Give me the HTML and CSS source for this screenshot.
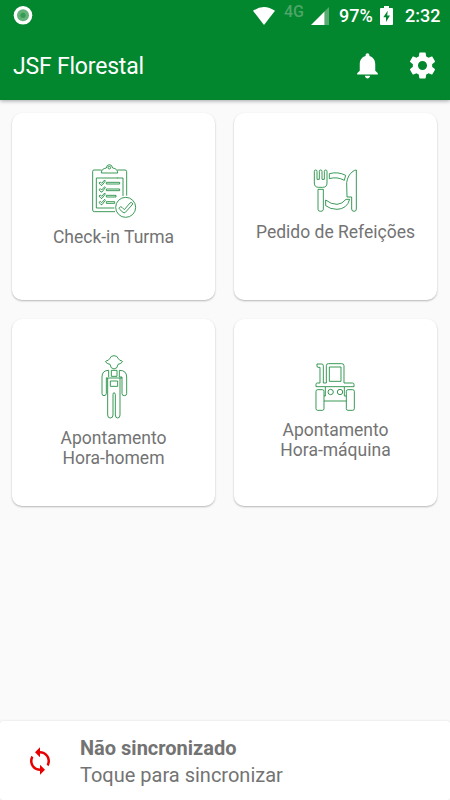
FILE: index.html
```html
<!DOCTYPE html>
<html lang="pt-BR">

<head>
    <meta charset="UTF-8">
    <meta name="viewport" content="width=device-width, initial-scale=1.0">
    <title>JSF Florestal</title>
    <link rel="stylesheet" href="styles.css">
</head>

<body>
    <header class="header">
        <div class="status-bar">
            <svg class="status-dot" viewBox="0 0 20 20">
                <circle cx="10" cy="9.3" r="9.3" fill="#ffffff"/>
                <circle cx="10" cy="9.3" r="6" fill="#65b27b"/>
                <circle cx="10" cy="9.3" r="2.6" fill="#359a52"/>
            </svg>
            <svg class="wifi" viewBox="0 0 22 18">
                <path d="M0 3.8Q11-3.8 22 3.8L11 18z" fill="#ffffff"/>
            </svg>
            <span class="network">4G</span>
            <svg class="signal" viewBox="0 0 18 18">
                <path d="M13.5 4.5L18 0v18h-4.5z" fill="#59aa70"/>
                <path d="M0 18L13.5 4.5V18z" fill="#ffffff"/>
            </svg>
            <span class="percent">97%</span>
            <svg class="battery" viewBox="0 0 13 19">
                <path d="M4 0h5v2h3q1 0 1 1v15q0 1-1 1H1q-1 0-1-1V3q0-1 1-1h3z" fill="#ffffff"/>
                <path d="M7.7 4.8L3.3 11.3H6V16l4-6.5H7.2z" fill="#02862e"/>
            </svg>
            <span class="clock">2:32</span>
        </div>
        <div class="toolbar">
            <h1 class="title">JSF Florestal</h1>
            <svg class="action" viewBox="0 0 24 24">
                <path d="M12 22c1.1 0 2-.9 2-2h-4c0 1.1.89 2 2 2zm6-6v-5c0-3.07-1.64-5.64-4.5-6.32V4c0-.83-.67-1.5-1.5-1.5s-1.5.67-1.5 1.5v.68C7.63 5.36 6 7.92 6 11v5l-2 2v1h16v-1l-2-2z"/>
            </svg>
            <svg class="action" viewBox="0 0 24 24">
                <path d="M19.43 12.98c.04-.32.07-.64.07-.98s-.03-.66-.07-.98l2.11-1.65c.19-.15.24-.42.12-.64l-2-3.46c-.12-.22-.39-.3-.61-.22l-2.49 1c-.52-.4-1.08-.73-1.69-.98l-.38-2.65C14.46 2.18 14.25 2 14 2h-4c-.25 0-.46.18-.49.42l-.38 2.65c-.61.25-1.17.59-1.69.98l-2.49-1c-.23-.09-.49 0-.61.22l-2 3.46c-.13.22-.07.49.12.64l2.11 1.65c-.04.32-.07.65-.07.98s.03.66.07.98l-2.11 1.65c-.19.15-.24.42-.12.64l2 3.46c.12.22.39.3.61.22l2.49-1c.52.4 1.08.73 1.69.98l.38 2.65c.03.24.24.42.49.42h4c.25 0 .46-.18.49-.42l.38-2.65c.61-.25 1.17-.59 1.69-.98l2.49 1c.23.09.49 0 .61-.22l2-3.46c.12-.22.07-.49-.12-.64l-2.11-1.65zM12 15.5c-1.93 0-3.5-1.57-3.5-3.5s1.57-3.5 3.5-3.5 3.5 1.57 3.5 3.5-1.57 3.5-3.5 3.5z"/>
            </svg>
        </div>
    </header>

    <main class="grid">
        <a class="card">
            <svg class="icon" width="70" height="60" viewBox="-3 36 210 180">
                <path d="M65 45H42q-4 0-4 4V165q0 5 5 5H105M112 45h23q5 0 5 5V122"/>
                <path d="M65 54h-1q0-13 15-15 1-10 9-10t10 10q15 2 15 15z"/>
                <circle cx="88" cy="38" r="4"/>
                <path d="M64 69H49v90h54M112 69h17v54M64 69h50"/>
                <path d="M57 84l4-3 4 4 9-10 2 3-10 13h-3zM57 104l4-3 4 4 9-10 2 3-10 13h-3zM57 123l4-3 4 4 9-10 2 3-10 13h-3zM57 142l4-3 4 4 9-10 2 3-10 13h-3z"/>
                <path d="M79 82h40v5H79zM79 102h40v5H79zM79 121h29v5H79zM79 140h25v5H79z"/>
                <circle cx="137" cy="157" r="30"/>
                <path d="M118 158q4-5 8-1l7 7 17-20q4-4 7 0 2 3-1 6l-20 22q-4 3-7 0l-10-9q-3-2-1-5z"/>
            </svg>
            <span class="label">Check-in Turma</span>
        </a>
        <a class="card">
            <svg class="icon" width="70" height="50" viewBox="3 51 210 150">
                <path d="M43 49q0-4 4-4t4 4v24h7V49q0-4 4-4t4 4v24h7V49q0-4 4-4t4 4V84q0 13-13 13H56q-13 0-13-13z"/>
                <path d="M54 103h16v60q0 6-8 6t-8-6z"/>
                <path d="M88 56q26-7 49 5l-4 15q-22-12-45-5z"/>
                <path d="M77 135q16 13 34 13 16-1 27-15h11q-8 29-38 30-20 0-34-11z"/>
                <path d="M169 45V162q0 7-7 7t-7-7V126h-14l-1-43q3-23 19-34 5-4 10-4z"/>
            </svg>
            <span class="label">Pedido de Refeições</span>
        </a>
        <a class="card">
            <svg class="icon" width="60" height="70" viewBox="-3 39 180 210">
                <path d="M63 48q8-1 11-7 3-9 13-9t13 9q3 6 11 7 3 2 0 4-5 5-12 6-1 13-12 14-11-1-12-14-7-1-12-6-3-2 0-4z"/>
                <path d="M71 76q-20 0-20 20v50q0 6 6 6t7-6V98M71 76v20M103 76v20M103 76q22 0 22 20v50q0 6-7 6t-7-6V96h-8"/>
                <path d="M79 76h17v18H79zM76 108h22v16H76zM64 99h47"/>
                <path d="M68 99V210q0 9 8 9t8-9V149q0-6 3-6t4 6v61q0 9 7 9t7-9V99"/>
            </svg>
            <span class="label">Apontamento<br>Hora-homem</span>
        </a>
        <a class="card">
            <svg class="icon" width="65" height="54" viewBox="-5 48 195 162">
                <path d="M46 99V52h-6q-3 0-3-4v-6h14q5 0 5 5v52M65 99V47q0-6 6-6h40q7 0 7 6v52"/>
                <path d="M74 51h35v43H74z"/>
                <path d="M46 99h-8q-4 0-4 4v7h28v28h-4M56 99h9M118 99h26q4 0 4 4v7h-29v28h6M119 110H62"/>
                <path d="M39 119h14q5 0 5 5v52q0 5-5 5H39q-5 0-5-5v-52q0-5 5-5zM130 119h14q5 0 5 5v52q0 5-5 5h-14q-5 0-5-5v-52q0-5 5-5zM58 153h67"/>
                <circle cx="78" cy="126" r="8"/>
                <circle cx="106" cy="126" r="8"/>
            </svg>
            <span class="label">Apontamento<br>Hora-máquina</span>
        </a>
    </main>

    <footer class="sync">
        <svg class="sync-icon" viewBox="0 0 24 24">
            <path d="M12 4V1L8 5l4 4V6c3.31 0 6 2.69 6 6 0 1.01-.25 1.97-.7 2.8l1.46 1.46C19.54 15.03 20 13.57 20 12c0-4.42-3.58-8-8-8zm0 14c-3.31 0-6-2.69-6-6 0-1.01.25-1.97.7-2.8L5.24 7.74C4.46 8.97 4 10.43 4 12c0 4.42 3.58 8 8 8v3l4-4-4-4v3z"/>
        </svg>
        <div class="sync-text">
            <strong>Não sincronizado</strong>
            <span>Toque para sincronizar</span>
        </div>
    </footer>
</body>

</html>
```

FILE: styles.css
```css
body {
    font-family: Roboto, "Noto Sans", sans-serif;
    background-color: #fafafa;
    color: #737373;
    margin: 0;
    height: 100vh;
    display: flex;
    flex-direction: column;
    overflow: hidden;
}

svg {
    display: block;
    flex-shrink: 0;
}

.header {
    height: 100px;
    background-color: #02862e;
    color: #ffffff;
    box-shadow: 0 1px 4px rgba(0, 0, 0, 0.35);
}

.status-bar {
    height: 31px;
    padding: 0 10px 0 13px;
    display: flex;
    align-items: center;
    font-size: 18px;
    font-weight: 500;
}

.status-dot {
    width: 20px;
    height: 20px;
    margin-right: auto;
}

.wifi {
    width: 22px;
    height: 18px;
    margin-right: 9px;
}

.network {
    width: 21px;
    margin-right: 6px;
    padding-bottom: 8px;
    font-size: 16px;
    color: #4da567;
}

.signal {
    width: 18px;
    height: 18px;
    margin-right: 10px;
}

.percent {
    width: 33px;
    margin-right: 8px;
}

.battery {
    width: 13px;
    height: 19px;
    margin-right: 12px;
}

.clock {
    width: 35px;
}

.toolbar {
    height: 69px;
    padding: 0 12px 0 13px;
    display: flex;
    align-items: center;
    gap: 24px;
}

.title {
    flex: 1;
    margin: 0;
    padding-top: 2px;
    font-size: 23px;
    font-weight: 400;
    letter-spacing: -0.2px;
}

.action {
    width: 31px;
    height: 31px;
    fill: #ffffff;
}

.grid {
    flex: 1;
    display: grid;
    grid-template-columns: 1fr 1fr;
    grid-auto-rows: 187px;
    align-content: start;
    gap: 19px;
    padding: 13px 13px 0 12px;
}

.card {
    display: flex;
    flex-direction: column;
    align-items: center;
    justify-content: center;
    background-color: #ffffff;
    border-radius: 10px;
    box-shadow: 0 1px 2px rgba(0, 0, 0, 0.28);
}

.icon {
    overflow: visible;
    fill: none;
    stroke: #1c8a3d;
    stroke-width: 2.6;
}

.label {
    font-size: 17.5px;
    line-height: 20px;
    text-align: center;
}

.sync {
    height: 79px;
    display: flex;
    align-items: center;
    background-color: #ffffff;
    border-radius: 3px;
    box-shadow: 0 0 2px rgba(0, 0, 0, 0.15);
}

.sync-icon {
    width: 30px;
    height: 30px;
    margin: 0 25px;
    fill: #e60000;
}

.sync-text {
    display: flex;
    flex-direction: column;
    padding-top: 2px;
    font-size: 20px;
    line-height: 27px;
}
```
